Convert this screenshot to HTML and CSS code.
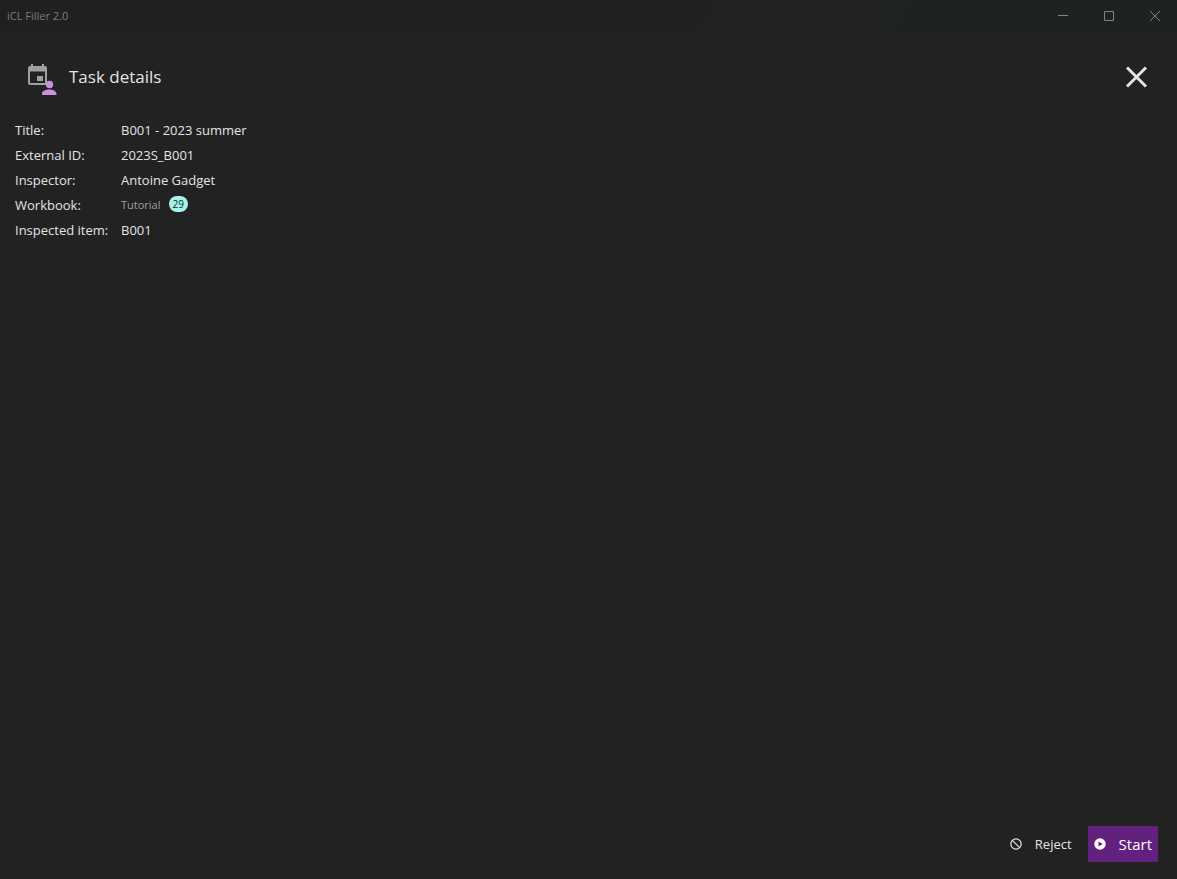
FILE: index.html
```html
<!DOCTYPE html>
<html lang="en">
<head>
    <meta charset="UTF-8">
    <meta name="viewport" content="width=device-width, initial-scale=1.0">
    <title>iCL Filler 2.0</title>
    <link rel="stylesheet" href="styles.css">
</head>
<body>
    <header class="titlebar">
        <span class="app-name">iCL Filler 2.0</span>
        <div class="window-controls">
            <button type="button" class="window-button" aria-label="Minimize">
                <svg width="12" height="12" viewBox="0 0 12 12"><path d="M1 5.5H11"/></svg>
            </button>
            <button type="button" class="window-button" aria-label="Maximize">
                <svg width="12" height="12" viewBox="0 0 12 12"><rect x="1.5" y="1.5" width="9" height="9" rx="0.500"/></svg>
            </button>
            <button type="button" class="window-button" aria-label="Close window">
                <svg width="12" height="12" viewBox="0 0 12 12"><path d="M1 1L11 11M11 1L1 11"/></svg>
            </button>
        </div>
    </header>

    <main class="page">
        <div class="page-header">
            <svg class="task-icon" width="30" height="32" viewBox="0 0 30 32">
                <path fill="#a0a0a0" fill-rule="evenodd" d="M3 0h2v2h9V0h2v2h1a2 2 0 0 1 2 2v15a2 2 0 0 1-2 2H2a2 2 0 0 1-2-2V4a2 2 0 0 1 2-2h1zM2 7.500v11.500h15V7.500z"/>
                <rect fill="#a0a0a0" x="9" y="12" width="6" height="5"/>
                <circle fill="#c792dc" cx="21.500" cy="20.500" r="3.700"/>
                <path fill="#c792dc" d="M14 31v-1.500c0-2.500 4-4 7.200-4s7.200 1.500 7.200 4V31z"/>
            </svg>
            <h1>Task details</h1>
            <button type="button" class="close-button" aria-label="Close">
                <svg width="24" height="24" viewBox="0 0 24 24"><path d="M3 2.500L22 21.500M22 2.500L3 21.500"/></svg>
            </button>
        </div>

        <dl class="details">
            <dt>Title:</dt>
            <dd>B001 - 2023 summer</dd>
            <dt>External ID:</dt>
            <dd>2023S_B001</dd>
            <dt>Inspector:</dt>
            <dd>Antoine Gadget</dd>
            <dt>Workbook:</dt>
            <dd class="workbook">Tutorial <span class="badge">29</span></dd>
            <dt>Inspected item:</dt>
            <dd>B001</dd>
        </dl>

        <footer class="actions">
            <button type="button" class="reject-button">
                <svg width="12" height="12" viewBox="0 0 12 12"><g fill="none" stroke="#e4e4e4" stroke-width="1.200"><circle cx="6" cy="6" r="5.200"/><path d="M2.300 2.300L9.700 9.700"/></g></svg>
                Reject
            </button>
            <button type="button" class="start-button">
                <svg width="12" height="12" viewBox="0 0 12 12"><circle cx="6" cy="6" r="5.700" fill="#ffffff"/><path d="M4.500 3.500L8.700 6L4.500 8.500z" fill="#62207f"/></svg>
                Start
            </button>
        </footer>
    </main>
</body>
</html>
```
FILE: styles.css
```css
* {
    box-sizing: border-box;
}
body {
    margin: 0;
    min-height: 100vh;
    display: flex;
    flex-direction: column;
    font-family: "Segoe UI", "Open Sans", sans-serif;
    font-size: 13px;
    color: #e4e4e4;
    background-color: #222222;
}
button {
    padding: 0;
    border: none;
    background: none;
    color: inherit;
    font-family: inherit;
    cursor: pointer;
}
svg {
    display: block;
    flex-shrink: 0;
}
.titlebar {
    display: flex;
    justify-content: space-between;
    height: 32px;
    padding-left: 7px;
    background: linear-gradient(120deg, #202020 0%, #212121 60%, #212321 74%, #1e2223 76%, #1e2223 100%);
}
.app-name {
    font-size: 11px;
    line-height: 32px;
    color: #7c7c7c;
}
.window-controls {
    display: flex;
}
.window-button {
    display: flex;
    align-items: center;
    justify-content: center;
    width: 46px;
    padding-left: 2px;
}
.window-button svg {
    fill: none;
    stroke: #858585;
}
.page {
    flex: 1;
    display: flex;
    flex-direction: column;
    padding: 24px 19px 17px 15px;
}
.page-header {
    display: flex;
    align-items: center;
    height: 42px;
    padding: 0 10px 0 13px;
}
.task-icon {
    margin-top: 6px;
}
.page-header h1 {
    margin: 0 auto 0 11px;
    font-size: 17px;
    font-weight: 400;
    line-height: 24px;
}
.close-button svg {
    fill: none;
    stroke: #e4e4e4;
    stroke-width: 3;
}
.details {
    display: grid;
    grid-template-columns: 106px 1fr;
    margin: 20px 0 0;
    line-height: 25px;
}
.details dd {
    margin: 0;
}
.details .workbook {
    display: flex;
    align-items: center;
    gap: 8px;
    height: 22px;
    font-size: 11px;
    color: #a0a0a0;
}
.badge {
    padding: 0 4px;
    border-radius: 8px;
    font-size: 10px;
    line-height: 16px;
    color: #222222;
    background-color: #a5f5ee;
}
.actions {
    display: flex;
    justify-content: flex-end;
    gap: 16px;
    margin-top: auto;
}
.actions button {
    display: flex;
    align-items: center;
    gap: 13px;
    height: 36px;
}
.actions .reject-button {
    font-size: 13px;
}
.actions .start-button {
    padding: 0 6px;
    font-size: 15px;
    color: #ffffff;
    background-color: #62207f;
}
```
